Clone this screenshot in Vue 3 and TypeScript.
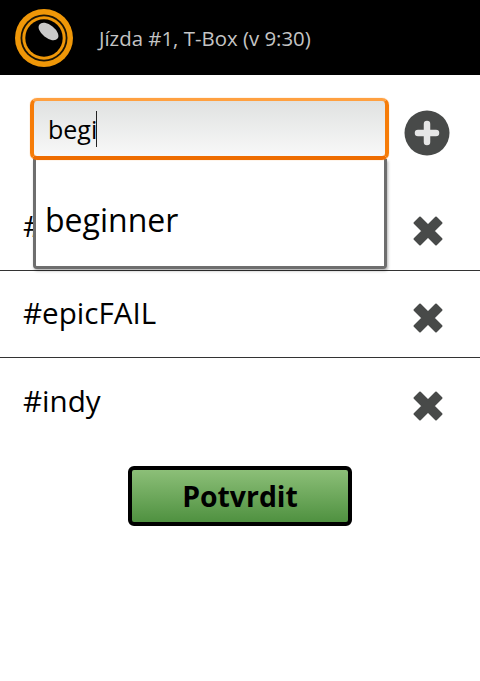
<script setup lang="ts">
const tags: string[] = ['#', '#epicFAIL', '#indy']
</script>

<template>
  <div class="screen">
    <header class="bar">
      <svg class="logo" width="60" height="60" viewBox="0 0 60 60">
        <circle cx="30" cy="30" r="29" fill="#ef9708" />
        <circle cx="30" cy="30" r="23.5" fill="#1c1405" />
        <circle cx="30" cy="30" r="21.7" fill="#ef9708" />
        <circle cx="30" cy="30" r="18.7" fill="#000" />
        <ellipse cx="34.5" cy="23.5" rx="11.5" ry="6.5" transform="rotate(38 34.5 23.5)" fill="#c9c9c9" />
      </svg>
      <span class="title">Jízda #1, T-Box (v 9:30)</span>
    </header>

    <div class="entry">
      <div class="combo">
        <div class="field"><span class="typed">begi</span><i class="caret"></i></div>
        <div class="menu"><span>beginner</span></div>
      </div>
      <svg class="add" width="46" height="46" viewBox="0 0 46 46">
        <circle cx="23" cy="23" r="22.5" fill="#484a49" />
        <path d="M14 23h18M23 14v18" stroke="#e6e6e6" stroke-width="6.5" stroke-linecap="round" />
      </svg>
    </div>

    <ul class="list">
      <li v-for="tag in tags" :key="tag" class="row">
        <span class="tag">{{ tag }}</span>
        <svg class="del" width="30" height="30" viewBox="0 0 30 30">
          <path
            d="M7 1.5L15 9.5L23 1.5L28.5 7L20.5 15L28.5 23L23 28.5L15 20.5L7 28.5L1.5 23L9.5 15L1.5 7Z"
            fill="#484a49"
            stroke="#484a49"
            stroke-width="2"
            stroke-linejoin="round"
          />
        </svg>
      </li>
    </ul>

    <div class="actions">
      <button class="confirm" type="button">Potvrdit</button>
    </div>
  </div>
</template>

<style scoped>
.screen {
  width: 480px;
  height: 681px;
  background: #fff;
  font-family: "Open Sans", "Noto Sans", sans-serif;
  color: #000;
  overflow: hidden;
}
.bar {
  height: 75px;
  background: #000;
  display: flex;
  align-items: center;
  padding-left: 14px;
  gap: 25px;
  box-sizing: border-box;
}
.logo {
  flex: none;
}
.title {
  color: #c4c4c4;
  font-size: 20.4px;
}
.entry {
  display: flex;
  align-items: flex-start;
  padding: 23px 30px 0 30px;
  gap: 16px;
  height: 109px;
  box-sizing: border-box;
  position: relative;
  z-index: 2;
}
.combo {
  position: relative;
  width: 359px;
}
.field {
  height: 62px;
  box-sizing: border-box;
  border: 3px solid;
  border-width: 3px 4px 4px 4px;
  border-color: #ffa040 #f67c08 #ee6c00 #f67c08;
  border-radius: 7px;
  background: linear-gradient(#e0e2e1, #f8f8f8);
  box-shadow: 0 0 1px rgba(250, 130, 10, 0.8);
  display: flex;
  align-items: center;
  padding-left: 14px;
  position: relative;
  z-index: 1;
}
.typed {
  font-size: 25px;
}
.caret {
  width: 1px;
  height: 36px;
  background: #222;
  margin-left: -1px;
}
.menu {
  position: absolute;
  left: 3px;
  right: 2px;
  top: 61px;
  height: 110px;
  box-sizing: border-box;
  background: #fff;
  border: 3px solid #6e6e6e;
  border-top: 0;
  border-radius: 0 0 4px 4px;
  box-shadow: 1px 2px 3px rgba(0, 0, 0, 0.3);
  padding: 14px 0 0 9px;
  display: flex;
  align-items: center;
  font-size: 32px;
}
.add {
  flex: none;
  margin-top: 12px;
  margin-left: -1px;
}
.list {
  list-style: none;
  margin: 0;
  padding: 0;
}
.row {
  height: 87px;
  box-sizing: border-box;
  display: flex;
  align-items: center;
  justify-content: space-between;
  padding: 0 37px 0 23px;
  border-bottom: 1px solid #333;
}
.row:last-child {
  border-bottom: 0;
}
.tag {
  font-size: 29.6px;
  margin-top: -3px;
}
.del {
  flex: none;
  margin-top: 8px;
}
.actions {
  display: flex;
  justify-content: center;
  padding-top: 21px;
}
.confirm {
  width: 224px;
  height: 60px;
  border: 4px solid #000;
  border-radius: 6px;
  background: linear-gradient(#8cbf78, #4f9140);
  font-family: inherit;
  font-size: 28.4px;
  font-weight: 700;
  color: #000;
  padding: 0;
}
</style>
